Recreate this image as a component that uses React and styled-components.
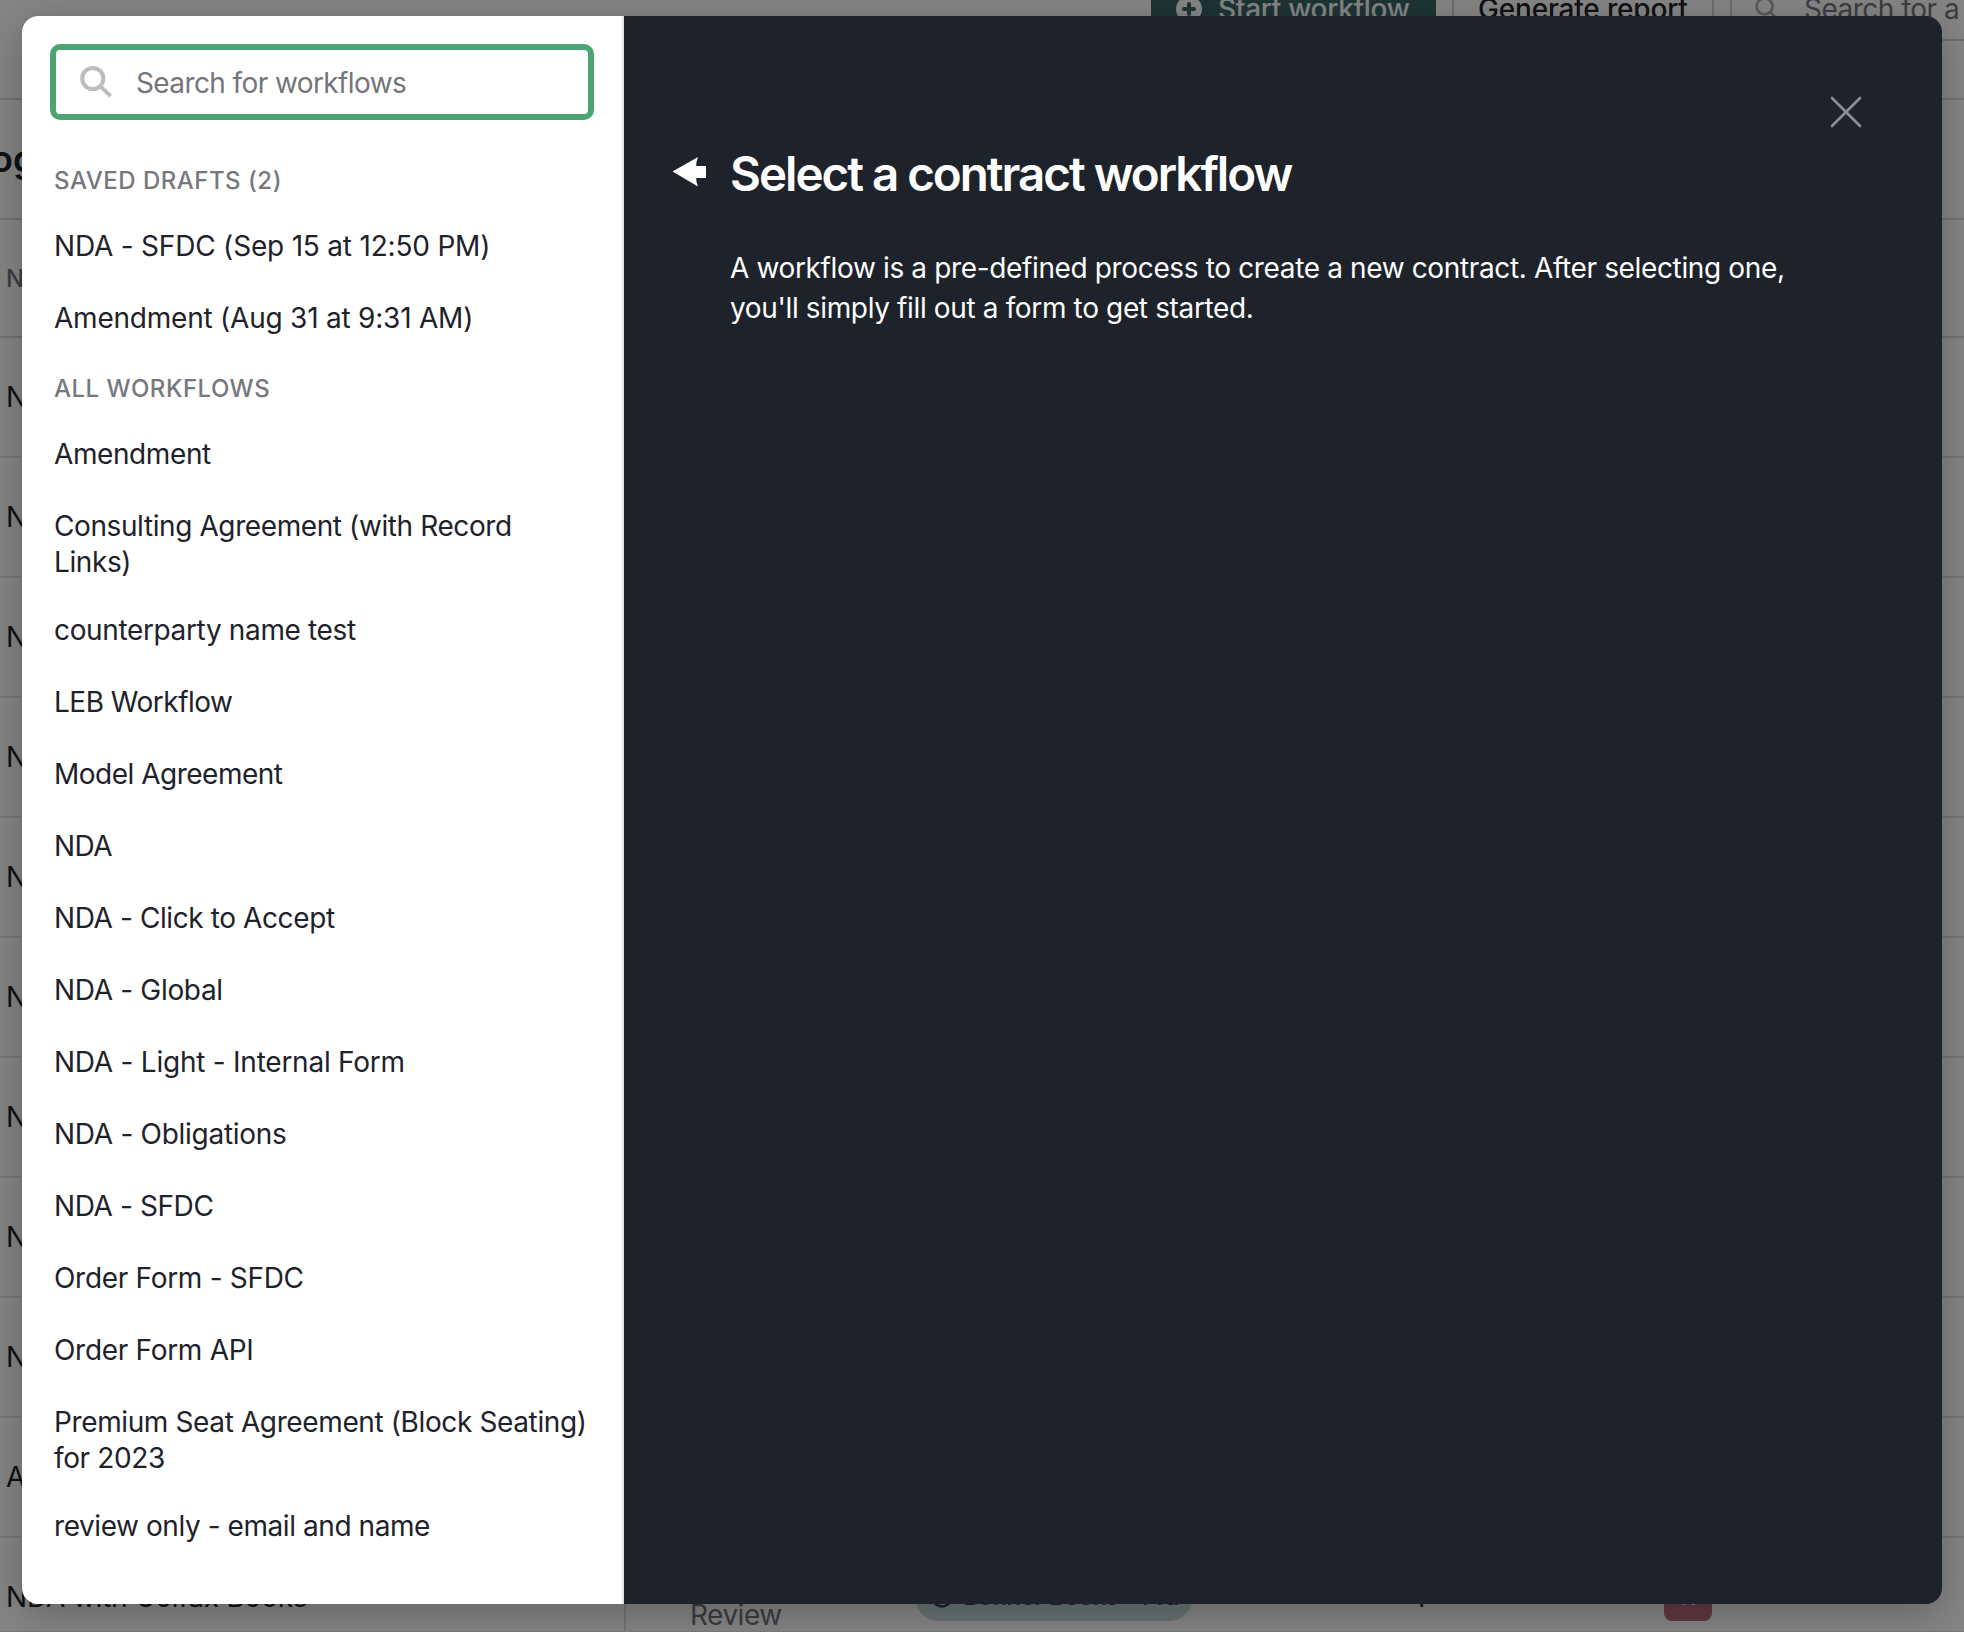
import React from 'react';
import styled, { createGlobalStyle } from 'styled-components';

const GlobalStyle = createGlobalStyle`
  * {
    box-sizing: border-box;
  }
  body {
    margin: 0;
    overflow: hidden;
    background: #fff;
    color: #1e222a;
    font-family: Inter, "Liberation Sans", sans-serif;
    font-size: 28px;
    font-weight: 430;
    line-height: 36px;
  }
`;

const Page = styled.div`
  width: 1964px;
  height: 1632px;
  overflow: hidden;
  border-bottom: 1px solid #ececee;
`;

const Toolbar = styled.header`
  display: flex;
  align-items: flex-end;
  height: 100px;
  padding: 0 0 57px 1151px;
  border-bottom: 2px solid #d9dadd;
`;

const ToolButton = styled.div`
  display: flex;
  flex: none;
  align-items: center;
  width: ${({ $width }) => $width}px;
  height: 64px;
  margin-right: 16px;
  padding-left: ${({ $primary }) => ($primary ? 25 : 24)}px;
  border: ${({ $primary }) => ($primary ? 'none' : '2px solid #d0d1d6')};
  background: ${({ $primary }) => ($primary ? '#396467' : '#fff')};
  color: ${({ $primary }) => ($primary ? '#fff' : '#1e222a')};
  font-weight: 500;
  letter-spacing: ${({ $primary }) => ($primary ? -0.3 : -0.17)}px;
  white-space: nowrap;
  svg {
    flex: none;
    margin-right: 16px;
  }
`;

const ToolSearch = styled.div`
  display: flex;
  flex: none;
  align-items: center;
  width: 400px;
  height: 64px;
  padding-left: 23px;
  border: 2px solid #d0d1d6;
  color: #74767e;
  letter-spacing: -0.5px;
  white-space: nowrap;
  svg {
    flex: none;
    margin-right: 25px;
  }
`;

const TitleBar = styled.div`
  display: flex;
  align-items: center;
  height: 120px;
  margin-left: -9px;
  border-bottom: 2px solid #d9dadd;
  font-size: 36px;
  font-weight: 600;
`;

const TableHead = styled.div`
  display: flex;
  align-items: center;
  height: 118px;
  padding: 2px 0 0 6px;
  border-bottom: 2px solid #d9dadd;
  color: #74767e;
  font-size: 24px;
  font-weight: 500;
`;

const TableRow = styled.div`
  display: flex;
  align-items: center;
  height: 120px;
  border-bottom: 2px solid #e4e5e8;
`;

const Cell = styled.div`
  display: flex;
  flex: none;
  align-items: center;
  width: ${({ $width }) => $width}px;
  height: 100%;
  padding-left: ${({ $pad }) => $pad}px;
  border-right: ${({ $divider }) => ($divider ? '2px solid #dcdfe4' : 'none')};
  letter-spacing: -0.2px;
  white-space: nowrap;
`;

const Status = styled.span`
  padding-top: 36px;
  color: #74767e;
  letter-spacing: -0.5px;
`;

const Pill = styled.span`
  display: flex;
  align-items: center;
  width: 278px;
  height: 48px;
  padding-left: 16px;
  border-radius: 24px;
  background: #c6dcdc;
  color: #2b4e52;
  font-size: 24px;
  font-weight: 500;
  letter-spacing: -0.4px;
  svg {
    flex: none;
    margin-right: 10px;
  }
`;

const Avatar = styled.span`
  display: flex;
  align-items: center;
  justify-content: center;
  width: 48px;
  height: 48px;
  border-radius: 8px;
  background: #b96f7b;
  color: #fff;
  font-size: 24px;
`;

const Backdrop = styled.div`
  position: absolute;
  inset: 0;
  width: 1964px;
  height: 1632px;
  padding: 16px 22px 28px;
  overflow: hidden;
  background: rgba(0, 0, 0, 0.48);
`;

const Modal = styled.div`
  display: flex;
  height: 1588px;
  border-radius: 16px;
  background: #1e222a;
  box-shadow: 0 10px 40px rgba(0, 0, 0, 0.25);
`;

const Sidebar = styled.aside`
  width: 602px;
  padding: 28px 28px 0;
  border-right: 2px solid #dfe3e8;
  border-radius: 16px 0 0 16px;
  background: #fff;
`;

const SearchBox = styled.div`
  display: flex;
  align-items: center;
  height: 76px;
  margin-bottom: 29px;
  border: 6px solid #4ca473;
  border-radius: 10px;
  padding-left: 24px;
  svg {
    flex: none;
    margin-right: 24px;
  }
`;

const SearchInput = styled.input`
  width: 420px;
  padding: 2px 0 0;
  border: 0;
  outline: 0;
  background: none;
  font: inherit;
  letter-spacing: -0.6px;
  &::placeholder {
    color: #74757b;
    opacity: 1;
  }
`;

const GroupTitle = styled.h3`
  height: 64px;
  margin: 0;
  padding-left: 4px;
  color: #77787e;
  font-size: 24px;
  font-weight: 500;
  line-height: 64px;
  letter-spacing: 0.5px;
`;

const Item = styled.div`
  min-height: 72px;
  padding: 16px 4px;
  letter-spacing: ${({ $tracking }) => $tracking}px;
`;

const ItemList = styled.div`
  margin-top: -1px;
  margin-bottom: 1px;
`;

const Detail = styled.section`
  flex: 1;
  padding: 74px 75px 0 47px;
`;

const CloseRow = styled.div`
  display: flex;
  justify-content: flex-end;
  height: 46px;
  svg {
    margin-top: 4px;
  }
`;

const Heading = styled.h1`
  display: flex;
  align-items: center;
  height: 75px;
  margin: 0;
  color: #fff;
  font-size: 47.5px;
  font-weight: 600;
  letter-spacing: -2px;
  white-space: nowrap;
  svg {
    flex: none;
    margin: -4px 23px 0 0;
  }
`;

const Description = styled.p`
  width: 1080px;
  margin: 37px 0 0 59px;
  color: #fff;
  line-height: 40px;
  letter-spacing: -0.36px;
`;

const SearchIcon = ({ size, color, width }) => (
  <svg width={size} height={size} viewBox="0 0 32 32" fill="none" stroke={color} strokeWidth={width}>
    <circle cx="12.8" cy="12.5" r="10.6" />
    <path d="M20.4 20.1 L30.5 30.2" />
  </svg>
);

const drafts = [
  { name: 'NDA - SFDC (Sep 15 at 12:50 PM)', tracking: -0.2 },
  { name: 'Amendment (Aug 31 at 9:31 AM)', tracking: -0.22 },
];

const workflows = [
  { name: 'Amendment', tracking: -0.4 },
  { name: 'Consulting Agreement (with Record Links)', tracking: -0.4 },
  { name: 'counterparty name test', tracking: -0.36 },
  { name: 'LEB Workflow', tracking: -0.5 },
  { name: 'Model Agreement', tracking: -0.5 },
  { name: 'NDA', tracking: -0.5 },
  { name: 'NDA - Click to Accept', tracking: -0.4 },
  { name: 'NDA - Global', tracking: -0.32 },
  { name: 'NDA - Light - Internal Form', tracking: -0.24 },
  { name: 'NDA - Obligations', tracking: -0.28 },
  { name: 'NDA - SFDC', tracking: -0.4 },
  { name: 'Order Form - SFDC', tracking: -0.3 },
  { name: 'Order Form API', tracking: -0.3 },
  { name: 'Premium Seat Agreement (Block Seating) for 2023', tracking: -0.38 },
  { name: 'review only - email and name', tracking: -0.43 },
];

const rows = ['N', 'N', 'N', 'N', 'N', 'N', 'N', 'N', 'N', 'A'];

const Background = () => (
  <Page>
    <Toolbar>
      <ToolButton $primary $width={285}>
        <svg width="26" height="26" viewBox="0 0 26 26">
          <circle cx="13" cy="13" r="13" fill="#fff" />
          <path d="M13 8v10M8 13h10" stroke="#396467" strokeWidth="4" strokeLinecap="round" />
        </svg>
        Start workflow
      </ToolButton>
      <ToolButton $width={262}>Generate report</ToolButton>
      <ToolSearch>
        <SearchIcon size={24} color="#a9abb1" width={3.5} />
        Search for a
      </ToolSearch>
    </Toolbar>
    <TitleBar>og</TitleBar>
    <TableHead>N</TableHead>
    {rows.map((name, i) => (
      <TableRow key={i}>
        <Cell $width={626} $pad={6} $divider>{name}</Cell>
      </TableRow>
    ))}
    <TableRow>
      <Cell $width={626} $pad={6} $divider>NDA with Colfax Books</Cell>
      <Cell $width={289} $pad={64}><Status>Review</Status></Cell>
      <Cell $width={499} $pad={0}>
        <Pill>
          <svg width="22" height="22" viewBox="0 0 22 22" fill="none" stroke="#2b4e52" strokeWidth="2.5">
            <circle cx="11" cy="11" r="9.5" />
          </svg>
          Bonner Books – Pra
        </Pill>
      </Cell>
      <Cell $width={250} $pad={0}>1</Cell>
      <Avatar>R</Avatar>
    </TableRow>
  </Page>
);

const App = () => (
  <>
    <GlobalStyle />
    <Background />
    <Backdrop>
      <Modal>
        <Sidebar>
          <SearchBox>
            <SearchIcon size={32} color="#bdbdc1" width={4} />
            <SearchInput placeholder="Search for workflows" />
          </SearchBox>
          <GroupTitle>SAVED DRAFTS (2)</GroupTitle>
          <ItemList>
            {drafts.map(({ name, tracking }) => (
              <Item key={name} $tracking={tracking}>{name}</Item>
            ))}
          </ItemList>
          <GroupTitle>ALL WORKFLOWS</GroupTitle>
          <ItemList>
            {workflows.map(({ name, tracking }) => (
              <Item key={name} $tracking={tracking}>{name}</Item>
            ))}
          </ItemList>
        </Sidebar>
        <Detail>
          <CloseRow>
            <svg width="42" height="42" viewBox="0 0 42 42" stroke="#8d8f97" strokeWidth="2.6" strokeLinecap="round">
              <path d="M7 4 L35 32 M35 4 L7 32" />
            </svg>
          </CloseRow>
          <Heading>
            <svg width="36" height="30" viewBox="0 0 36 30" fill="#fff">
              <path d="M1.5 14.5 L27 0 Q25 5 25.2 9 H35 V21 H25.2 Q25 25 27 29.5 Z" />
            </svg>
            Select a contract workflow
          </Heading>
          <Description>
            A workflow is a pre-defined process to create a new contract. After selecting one,
            you&apos;ll simply fill out a form to get started.
          </Description>
        </Detail>
      </Modal>
    </Backdrop>
  </>
);

export default App;
